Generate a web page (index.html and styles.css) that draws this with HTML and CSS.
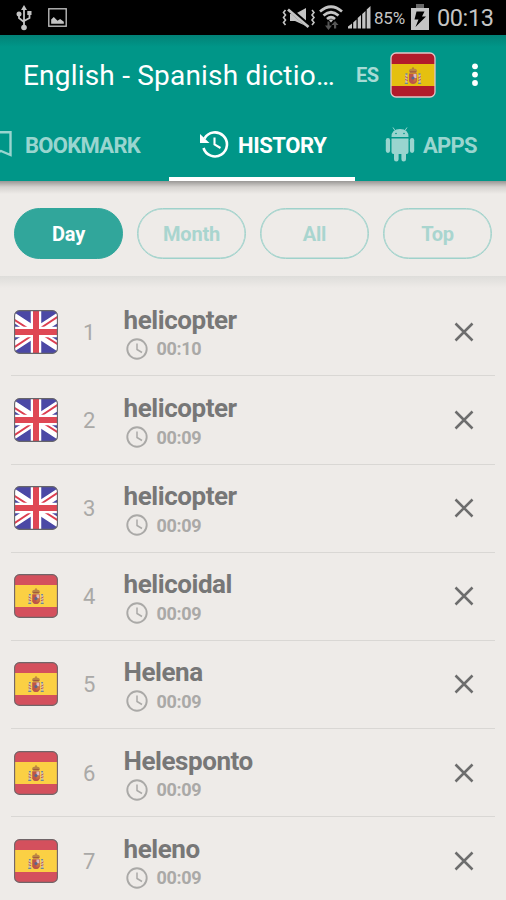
FILE: index.html
```html
<!DOCTYPE html>
<html lang="en">
<head>
<meta charset="utf-8">
<title>English - Spanish dictionary</title>
<link rel="stylesheet" href="styles.css">
</head>
<body>
<svg class="defs" aria-hidden="true">
  <symbol id="crest" viewBox="0 0 18 18">
    <path d="M5 4.500Q4.500 1.500 9 1.500Q13.500 1.500 13 4.500L12 6H6Z" fill="#b98545"/>
    <path d="M9 .3V2M6 4.800H12" stroke="#a0563b" stroke-width="1"/>
    <path d="M5 6.500H13V14Q12 17 9 17Q6 17 5 14Z" fill="#bd5548"/>
    <path d="M9.500 7H12.500V11H9.500Z" fill="#dcbcc0"/>
    <path d="M9.500 11H12.500V14L9.500 15Z" fill="#c9733f"/>
    <circle cx="9" cy="11" r="1.600" fill="#56688f"/>
    <path d="M2.300 7V16M15.700 7V16" stroke="#c9c0b0" stroke-width="1.900"/>
    <path d="M1 9.500L4 11M14 11L17 9.500M1 12.500L4 13.500M14 13.500L17 12.500" stroke="#bd565a" stroke-width="1"/>
    <path d="M.8 16.300H4M14 16.300H17.200M1.500 7H3.500M14.500 7H16.500" stroke="#6f8793" stroke-width="1.300"/>
  </symbol>
  <symbol id="uk" viewBox="0 0 44 44">
    <clipPath id="round"><rect x=".5" y=".5" width="43" height="43" rx="5"/></clipPath>
    <g clip-path="url(#round)">
      <path d="M0 0H44V44H0Z" fill="#4b48a5"/>
      <path d="M-4 5L48 39M48 5L-4 39" stroke="#fff" stroke-width="9"/>
      <path d="M0 9.500L14 18.500M44 6.500L26 18.500M0 37.500L18 25.500M44 34.500L30 25.500" stroke="#dc3e50" stroke-width="2"/>
      <path d="M22 0V44M0 22H44" stroke="#fff" stroke-width="10.500"/>
      <path d="M22 0V44M0 22H44" stroke="#df4754" stroke-width="6"/>
    </g>
    <rect x=".6" y=".6" width="42.800" height="42.800" rx="5" fill="none" stroke="#66656a" stroke-width="1.100"/>
  </symbol>
  <symbol id="es" viewBox="0 0 44 44">
    <rect x=".5" y=".5" width="43" height="43" rx="5" fill="#d4505d"/>
    <path d="M1 11H43V33H1Z" fill="#fbd044"/>
    <use href="#crest" x="13.500" y="14" width="17" height="17"/>
    <rect x=".6" y=".6" width="42.800" height="42.800" rx="5" fill="none" stroke="#706568" stroke-width="1.100"/>
  </symbol>
  <symbol id="clock" viewBox="0 0 24 24">
    <circle cx="12" cy="12" r="9.700" fill="none" stroke="#aaa9a7" stroke-width="1.900"/>
    <path d="M12 6.500V12.500L17 15.500" fill="none" stroke="#aaa9a7" stroke-width="1.500"/>
  </symbol>
  <symbol id="close" viewBox="0 0 20 20">
    <path d="M1.500 1.500L18.500 18.500M18.500 1.500L1.500 18.500" stroke="#6d6d6d" stroke-width="2.500"/>
  </symbol>
</svg>

<header class="status">
  <svg class="usb" viewBox="0 0 16 26"><g fill="none" stroke="#c4c4c4" stroke-width="1.800"><path d="M8 4V23M3 9V13L8 17M13.500 8V13L8 16"/></g><path d="M8 0L11 5H5Z" fill="#c4c4c4"/><circle cx="8" cy="22.500" r="2.800" fill="#c4c4c4"/><circle cx="3" cy="9" r="2.500" fill="#c4c4c4"/><path d="M11.300 6H15.500V10H11.300Z" fill="#c4c4c4"/></svg>
  <svg class="image" viewBox="0 0 18 18"><rect x=".75" y=".75" width="16.500" height="16.500" fill="none" stroke="#bdbdbd" stroke-width="1.300"/><path d="M3 15V11L5.500 8.500L9 12L11.500 10.500L15 13V15Z" fill="#c4c4c4"/></svg>
  <span class="spacer"></span>
  <svg class="mute" viewBox="0 0 34 22"><path d="M8 7H13L24 1V19L13 14H8Z" fill="#c4c4c4"/><path d="M6 1L27 19" stroke="#000" stroke-width="4.500"/><path d="M6 2.500L26.500 20" stroke="#c4c4c4" stroke-width="2.800"/><path d="M3.500 3L1.500 5.500L3.500 8L1.500 10.500L3.500 13L1.500 15.500L3.500 18M30 3L32 5.500L30 8L32 10.500L30 13L32 15.500L30 18" fill="none" stroke="#c4c4c4" stroke-width="1.600"/></svg>
  <svg class="wifi" viewBox="0 0 24 26"><g fill="none" stroke="#c4c4c4" stroke-width="2.700"><path d="M1 6.500Q12 -3 23 6.500M4.500 10.500Q12 4 19.500 10.500M8 14Q12 10.500 16 14"/></g><path d="M9.500 14.500H14.500L12 17.500Z" fill="#c4c4c4"/><path d="M6 20.500H8.500V16.500H10.500V20.500H13L9.500 25ZM16 16L19.500 20H17.200V23.500H15V20H12.500Z" fill="#555"/></svg>
  <svg class="signal" viewBox="0 0 23 23"><path d="M0 22.500V20.500L4 17.500V22.500ZM5.200 22.500V16.500L8.500 13.500V22.500ZM9.700 22.500V12L13 9V22.500ZM14.200 22.500V8L17.500 5V22.500ZM18.700 22.500V3.500L22.500 0V22.500Z" fill="#c4c4c4"/></svg>
  <span class="percent">85%</span>
  <svg class="battery" viewBox="0 0 18 26"><path d="M0 4H18V26H0Z" fill="#c4c4c4"/><path d="M5 0H13V4H5Z" fill="#666"/><path d="M5.500 7.500H13.500L11 12.500H15L4.500 23L7.500 15.500H3.500Z" fill="#000"/></svg>
  <time class="time">00:13</time>
</header>

<div class="toolbar">
  <h1 class="title">English - Spanish dictio…</h1>
  <span class="lang">ES</span>
  <svg class="lang-flag" viewBox="0 0 46 46"><rect x="1" y="1" width="44" height="44" rx="5" fill="#b21b2b"/><path d="M1 12H45V34H1Z" fill="#e5c010"/><use href="#crest" x="14" y="15" width="18" height="18"/><rect x="1" y="1" width="44" height="44" rx="5" fill="none" stroke="#e2c5c8" stroke-width="1.300"/></svg>
  <svg class="more" viewBox="0 0 6 24"><g fill="#fff"><circle cx="3" cy="3.300" r="2.900"/><circle cx="3" cy="11.600" r="2.900"/><circle cx="3" cy="20" r="2.900"/></g></svg>
</div>

<nav class="tabs">
  <div class="tab tab-bookmark"><svg class="bookmark-icon" viewBox="0 0 22 26"><path d="M1.500 1.200H20.500V24L11 20L1.500 24Z" fill="none" stroke="#99d5cf" stroke-width="2.400"/></svg><span>BOOKMARK</span></div>
  <div class="tab tab-history active"><svg class="history-icon" viewBox="0 0 29 28"><path d="M4.500 8.500A12 12 0 1 1 3.500 18" fill="none" stroke="#fff" stroke-width="2.600"/><path d="M0 4V13H9.500Z" fill="#fff"/><path d="M14.500 7.500V14.500L20.500 18" fill="none" stroke="#fff" stroke-width="2.100"/></svg><span>HISTORY</span></div>
  <div class="tab tab-apps"><svg class="android-icon" viewBox="0 0 30 35"><g fill="#99d5cf"><path d="M6.500 10Q6.500 2 15 2Q23.500 2 23.500 10ZM6.500 11.500H23.500V25Q23.500 27 21.500 27H21V32.300A2.300 2.300 0 0 1 16.400 32.300V27H13.600V32.300A2.300 2.300 0 0 1 9 32.300V27H8.500Q6.500 27 6.500 25Z"/><rect x=".8" y="11" width="4.300" height="15" rx="2.150"/><rect x="24.900" y="11" width="4.300" height="15" rx="2.150"/></g><path d="M8 .5L10 3.500M22 .5L20 3.500" stroke="#99d5cf" stroke-width="1"/><circle cx="11" cy="6.500" r=".8" fill="#009688"/><circle cx="19" cy="6.500" r=".8" fill="#009688"/></svg><span>APPS</span></div>
</nav>

<main class="content">
  <div class="filters">
    <button class="pill selected">Day</button>
    <button class="pill">Month</button>
    <button class="pill">All</button>
    <button class="pill">Top</button>
  </div>
  <ul class="list">
    <li class="row"><svg class="flag"><use href="#uk"/></svg><span class="num">1</span><div class="entry"><b class="word">helicopter</b><div class="when"><svg class="clock"><use href="#clock"/></svg><time>00:10</time></div></div><svg class="close"><use href="#close"/></svg></li>
    <li class="row"><svg class="flag"><use href="#uk"/></svg><span class="num">2</span><div class="entry"><b class="word">helicopter</b><div class="when"><svg class="clock"><use href="#clock"/></svg><time>00:09</time></div></div><svg class="close"><use href="#close"/></svg></li>
    <li class="row"><svg class="flag"><use href="#uk"/></svg><span class="num">3</span><div class="entry"><b class="word">helicopter</b><div class="when"><svg class="clock"><use href="#clock"/></svg><time>00:09</time></div></div><svg class="close"><use href="#close"/></svg></li>
    <li class="row"><svg class="flag"><use href="#es"/></svg><span class="num">4</span><div class="entry"><b class="word">helicoidal</b><div class="when"><svg class="clock"><use href="#clock"/></svg><time>00:09</time></div></div><svg class="close"><use href="#close"/></svg></li>
    <li class="row"><svg class="flag"><use href="#es"/></svg><span class="num">5</span><div class="entry"><b class="word">Helena</b><div class="when"><svg class="clock"><use href="#clock"/></svg><time>00:09</time></div></div><svg class="close"><use href="#close"/></svg></li>
    <li class="row"><svg class="flag"><use href="#es"/></svg><span class="num">6</span><div class="entry"><b class="word">Helesponto</b><div class="when"><svg class="clock"><use href="#clock"/></svg><time>00:09</time></div></div><svg class="close"><use href="#close"/></svg></li>
    <li class="row"><svg class="flag"><use href="#es"/></svg><span class="num">7</span><div class="entry"><b class="word">heleno</b><div class="when"><svg class="clock"><use href="#clock"/></svg><time>00:09</time></div></div><svg class="close"><use href="#close"/></svg></li>
  </ul>
</main>
</body>
</html>
```
FILE: styles.css
```css
* { box-sizing: border-box; }
body { margin: 0; width: 506px; height: 900px; overflow: hidden; background: #eeebe8; font-family: Roboto, "Liberation Sans", sans-serif; }
svg { display: block; flex: none; }
.defs { position: absolute; width: 0; height: 0; }

.status { display: flex; align-items: center; height: 35px; padding: 0 12px 0 16px; background: #000; color: #c4c4c4; }
.usb { width: 16px; height: 26px; }
.image { width: 19px; height: 19px; margin-left: 16px; }
.spacer { flex: 1; }
.mute { width: 34px; height: 22px; }
.wifi { width: 24px; height: 26px; margin-left: 3px; }
.signal { width: 23px; height: 23px; margin-left: 5px; }
.percent { width: 33px; margin-left: 3px; font-size: 17px; letter-spacing: -.2px; white-space: nowrap; }
.battery { width: 18px; height: 26px; margin: -1px 1px 0 4px; }
.time { width: 57px; margin-left: 7px; font-size: 23.500px; letter-spacing: -.4px; white-space: nowrap; }

.toolbar { display: flex; align-items: center; height: 75px; padding: 4px 28px 0 23px; background: linear-gradient(#028277, #009688 12px); color: #fff; }
.title { width: 333px; margin: 0; padding-top: 2px; font-size: 28px; font-weight: 400; letter-spacing: .2px; white-space: nowrap; }
.lang { width: 34px; padding-top: 1px; font-size: 20px; font-weight: 700; letter-spacing: -.5px; color: #a6dbd5; }
.lang-flag { width: 46px; height: 46px; }
.more { width: 6px; height: 24px; margin-left: auto; }

.tabs { display: flex; height: 71px; overflow: hidden; background: #009688; color: #99d5cf; font-size: 22px; font-weight: 700; line-height: 26px; }
.tab { display: flex; align-items: center; white-space: nowrap; }
.tab-bookmark { width: 169px; letter-spacing: -.7px; }
.bookmark-icon { width: 22px; height: 26px; margin: -4px 13px 0 -10px; }
.tab-history { width: 186px; padding: 4px 0 0 31px; letter-spacing: -.4px; }
.active { color: #fff; border-bottom: 4px solid #fff; }
.history-icon { width: 29px; height: 28px; margin: -4px 9px 0 0; }
.tab-apps { padding-left: 30px; letter-spacing: -.7px; }
.android-icon { width: 30px; height: 35px; margin: -3px 8px 0 0; }

.content { background: linear-gradient(#999795, #d5d2cf 6px, #eeebe8 13px); }
.filters { display: flex; gap: 14px; height: 95px; padding: 27px 14px 0; }
.pill { width: 109.200px; height: 51px; padding: 0; border: 1.500px solid #9fd2cb; border-radius: 26px; background: transparent; color: #a9d5cf; font: 700 20px/48px Roboto, sans-serif; letter-spacing: -.2px; box-shadow: inset 0 0 0 .5px #9fd2cb; }
.selected { border-color: #31a69b; background: #31a69b; color: #fff; box-shadow: none; }
.list { margin: 0; padding: 12.300px 11px 0; list-style: none; background: linear-gradient(#deddda, #eeebe8 12px); }
.row { display: flex; align-items: center; height: 88.150px; padding-left: 3px; border-bottom: 1px solid #d9d7d4; }
.flag { width: 44px; height: 44px; }
.num { width: 62px; padding: 1px 0 0 25px; font-size: 22px; color: #aaa9a7; }
.entry { flex: 1; padding: 4px 0 0 3.600px; }
.word { display: block; font-size: 26px; font-weight: 700; letter-spacing: -.45px; line-height: 30px; color: #777; }
.when { display: flex; align-items: center; height: 28px; color: #aaa9a7; font-size: 18px; font-weight: 700; letter-spacing: -.35px; }
.clock { width: 24px; height: 24px; margin: 0 8px 0 1px; }
.close { width: 20px; height: 20px; margin-right: 21px; }
```
